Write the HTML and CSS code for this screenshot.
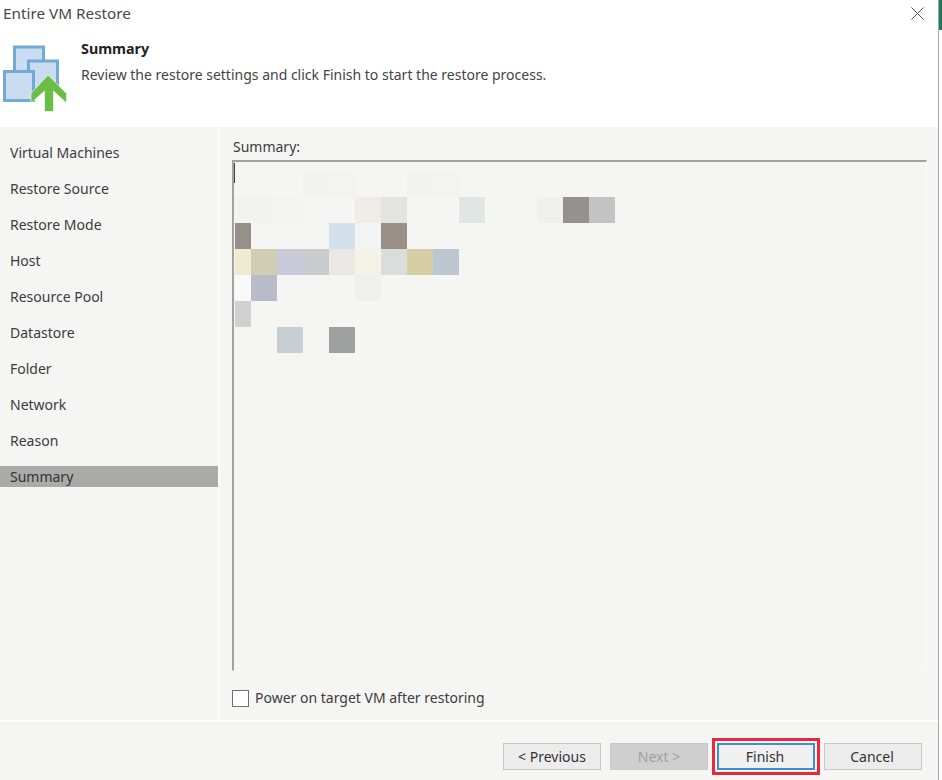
FILE: index.html
```html
<!DOCTYPE html>
<html lang="en">
<head>
<meta charset="utf-8">
<title>Entire VM Restore</title>
<link rel="stylesheet" href="styles.css">
</head>
<body>
<div class="page">
  <div class="window">
    <header class="header">
      <div class="titlebar">
        <span class="title">Entire VM Restore</span>
        <svg class="close" viewBox="0 0 13 13" width="13" height="13"><path d="M0.5 0.5L12.5 12.5M12.5 0.5L0.5 12.5" stroke="#555" stroke-width="1" fill="none"/></svg>
      </div>
      <div class="banner">
        <svg class="logo" viewBox="3 45 64 67" width="64" height="67">
          <rect x="14.500" y="47" width="29" height="29" fill="#c9dcf2" stroke="#72aad4" stroke-width="3"/>
          <rect x="28.500" y="61" width="29" height="29" fill="#c9dcf2" stroke="#72aad4" stroke-width="3"/>
          <rect x="4.500" y="71.500" width="29" height="29" fill="#c9dcf2" stroke="#72aad4" stroke-width="3"/>
          <path d="M48 75L66.500 93.500V103L53.500 91V111.500H44.500V91L31 103V93.500Z" fill="#6cbd45" stroke="#fff" stroke-width="0.600"/>
        </svg>
        <div class="banner-text">
          <h1 class="heading">Summary</h1>
          <p class="desc">Review the restore settings and click Finish to start the restore process.</p>
        </div>
      </div>
    </header>
    <div class="body">
      <nav class="nav">
        <div class="nav-item">Virtual Machines</div>
        <div class="nav-item">Restore Source</div>
        <div class="nav-item">Restore Mode</div>
        <div class="nav-item">Host</div>
        <div class="nav-item">Resource Pool</div>
        <div class="nav-item">Datastore</div>
        <div class="nav-item">Folder</div>
        <div class="nav-item">Network</div>
        <div class="nav-item">Reason</div>
        <div class="nav-item active">Summary</div>
      </nav>
      <main class="content">
        <label class="field-label">Summary:</label>
        <div class="textbox">
          <span class="caret"></span>
          <div class="mosaic">
            <i></i><i></i><i></i><i class="c-f1"></i><i class="c-f3"></i><i></i><i></i><i class="c-f1"></i><i class="c-f3"></i><i></i><i></i><i></i><i></i><i></i><i></i>
            <i class="c-r1a"></i><i class="c-r1b"></i><i class="c-f3"></i><i></i><i></i><i class="c-r1c"></i><i class="c-r1d"></i><i></i><i></i><i class="c-r1e"></i><i></i><i></i><i class="c-f0"></i><i class="c-r1f"></i><i class="c-r1g"></i>
            <i class="c-r2a"></i><i></i><i></i><i></i><i class="c-r2b"></i><i class="c-r2c"></i><i class="c-r2d"></i><i></i><i></i><i></i><i></i><i></i><i></i><i></i><i></i>
            <i class="c-r3a"></i><i class="c-r3b"></i><i class="c-r3c"></i><i class="c-r3d"></i><i class="c-r3e"></i><i class="c-r3f"></i><i class="c-r3g"></i><i class="c-r3h"></i><i class="c-r3i"></i><i></i><i></i><i></i><i></i><i></i><i></i>
            <i class="c-f8"></i><i class="c-r4a"></i><i></i><i></i><i></i><i class="c-f0"></i><i></i><i></i><i></i><i></i><i></i><i></i><i></i><i></i><i></i>
            <i class="c-r5a"></i><i></i><i></i><i></i><i></i><i></i><i></i><i></i><i></i><i></i><i></i><i></i><i></i><i></i><i></i>
            <i></i><i></i><i class="c-r6a"></i><i></i><i class="c-r6b"></i><i></i><i class="c-r6c"></i><i></i><i></i><i></i><i></i><i></i><i></i><i></i><i></i>
          </div>
        </div>
        <label class="check-row"><span class="checkbox"></span><span>Power on target VM after restoring</span></label>
      </main>
    </div>
    <footer class="footer">
      <button class="btn">&lt; Previous</button>
      <button class="btn disabled">Next &gt;</button>
      <button class="btn primary">Finish</button>
      <button class="btn nudge">Cancel</button>
    </footer>
  </div>
  <div class="edge"><div class="edge-top"></div></div>
</div>
</body>
</html>
```
FILE: styles.css
```css
* { box-sizing: border-box; }
html, body { margin: 0; height: 100%; }
body {
  font-family: "Noto Sans", "Open Sans", sans-serif;
  font-size: 14px;
  color: #3c3c3c;
  background: #fff;
}
.page { display: flex; width: 942px; height: 780px; overflow: hidden; }
.window { width: 938px; height: 780px; flex: none; display: flex; flex-direction: column; background: #f5f5f3; }
.edge { width: 4px; height: 780px; flex: none; background: #fff; border-left: 1px solid #a8a8a8; }
.edge-top { height: 30px; background: #1f7a5c; }

.header { height: 127px; background: #fff; display: flex; flex-direction: column; }
.titlebar { height: 38px; padding: 3px 14px 0 3px; display: flex; justify-content: space-between; align-items: flex-start; }
.title { font-size: 15.300px; line-height: 20px; color: #484848; }
.close { margin-top: 4px; }
.banner { display: flex; padding: 2px 0 0 3px; gap: 14px; }
.logo { display: block; flex: none; margin-top: 5px; }
.heading { margin: 0; font-size: 14.300px; line-height: 18px; font-weight: 700; color: #222; }
.desc { margin: 8px 0 0; line-height: 18px; font-size: 14px; color: #444; }

.body { flex: none; height: 595px; display: flex; border-bottom: 2px solid #fff; }
.nav { width: 220px; flex: none; padding-top: 15px; display: flex; flex-direction: column; gap: 15px; border-right: 2px solid #fbfbfb; }
.nav-item { height: 21px; line-height: 21px; padding-left: 10px; }
.nav-item.active { background: #aaaaa8; color: #333; }

.content { flex: none; width: 718px; padding: 11px 12px 0 12px; display: flex; flex-direction: column; }
.field-label { display: block; height: 22px; line-height: 18px; padding-left: 1px; }
.textbox {
  position: relative;
  width: 695px;
  height: 511px;
  border-top: 2px solid #a2a2a0;
  border-left: 2px solid #a2a2a0;
  border-right: 1px solid #fafafa;
  border-bottom: 1px solid #fafafa;
  padding: 9px 0 0 1px;
}
.caret { position: absolute; left: 0; top: 1px; width: 1px; height: 20px; background: #444; }
.mosaic { display: grid; grid-template-columns: 16px repeat(14, 26px); grid-auto-rows: 26px; width: max-content; }
.mosaic i { display: block; }
.c-f0 { background: #f0f0ef; }
.c-f1 { background: #f1f1f0; }
.c-f3 { background: #f3f3f2; }
.c-f8 { background: #f9f9f9; }
.c-r1a { background: #f2f3ee; }
.c-r1b { background: #f2f2ee; }
.c-r1c { background: #eeeee6; }
.c-r1d { background: #e3e3e1; }
.c-r1e { background: #dfe6e3; }
.c-r1f { background: #949290; }
.c-r1g { background: #c3c3c4; }
.c-r2a { background: #959089; }
.c-r2b { background: #d3e0e9; }
.c-r2c { background: #f1f3f4; }
.c-r2d { background: #998f88; }
.c-r3a { background: #f0ebd0; }
.c-r3b { background: #d0cdb5; }
.c-r3c { background: #c9ccd8; }
.c-r3d { background: #cbcccd; }
.c-r3e { background: #ebe7e5; }
.c-r3f { background: #f5f3e8; }
.c-r3g { background: #d9dedc; }
.c-r3h { background: #d6cfa6; }
.c-r3i { background: #bdc7d2; }
.c-r4a { background: #b9bcc8; }
.c-r5a { background: #d0d0d0; }
.c-r6a { background: #c7cfd2; }
.c-r6b { background: #9da09e; }
.c-r6c { background: #f5f6f1; }

.check-row { display: flex; align-items: center; gap: 6px; margin-top: 17px; line-height: 20px; }
.checkbox { width: 17px; height: 17px; background: #fff; border: 1px solid #707070; }

.footer { flex: 1; display: flex; justify-content: flex-end; gap: 9px; padding: 21px 16px 0 0; background: #f5f5f3; }
.btn {
  width: 98px;
  height: 27px;
  padding: 0;
  font: inherit;
  color: #333;
  background: #ececec;
  border: 1px solid #c8c8c8;
}
.btn.nudge { padding-right: 2px; }
.btn.disabled { background: #cfcfcf; border-color: #c8c8c8; color: #a0a0a0; }
.btn.primary { padding-right: 2px; border: 2px solid #3d8fd1; background: #f0f0f0; outline: 3px solid #e8283c; outline-offset: 2px; }
```
